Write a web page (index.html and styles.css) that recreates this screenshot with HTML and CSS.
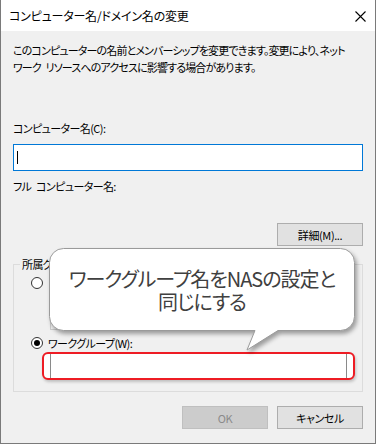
FILE: index.html
```html
<!DOCTYPE html>
<html lang="ja">
<head>
    <meta charset="UTF-8">
    <title>コンピューター名/ドメイン名の変更</title>
    <link rel="stylesheet" href="styles.css">
</head>
<body>

<div class="window">
    <div class="titlebar">
        <span class="title">コンピューター名/ドメイン名の変更</span>
        <svg class="close" width="11" height="11" viewBox="0 0 11 11">
            <path d="M0.5 0.5 L10.5 10.5 M10.5 0.5 L0.5 10.5" stroke="#000" stroke-width="1.1" fill="none"/>
        </svg>
    </div>

    <div class="content">
        <p class="desc">このコンピューターの名前とメンバーシップを変更できます。変更により、ネット<br>ワーク リソースへのアクセスに影響する場合があります。</p>

        <p class="field-label label-name">コンピューター名(C):</p>
        <div class="textbox focused"><span class="caret"></span></div>

        <p class="field-label label-full">フル コンピューター名:</p>

        <div class="row-right">
            <button class="btn">詳細(M)...</button>
        </div>

        <fieldset class="group">
            <legend>所属グループ</legend>
            <div class="radio-row">
                <span class="radio"></span>
                <span>ドメイン(D):</span>
            </div>
            <div class="textbox disabled"></div>
            <div class="radio-row">
                <span class="radio checked"></span>
                <span>ワークグループ(W):</span>
            </div>
            <div class="highlight">
                <div class="textbox workgroup"></div>
            </div>
        </fieldset>

        <div class="buttons">
            <button class="btn" disabled>OK</button>
            <button class="btn">キャンセル</button>
        </div>
    </div>

    <!-- annotation balloon over the dialog -->
    <div class="callout">
        <svg class="callout-shape" width="306" height="104" viewBox="0 0 306 104">
            <path d="M14.5 0.5 H291.5 A14 14 0 0 1 305.5 14.5 V68.5 A14 14 0 0 1 291.5 82.5 H229 L198 102 L206 82.5 H14.5 A14 14 0 0 1 0.5 68.5 V14.5 A14 14 0 0 1 14.5 0.5 Z" fill="#fff" stroke="#9a9a9a" stroke-width="1"/>
        </svg>
        <p class="callout-text">ワークグループ名をNASの設定と<br>同じにする</p>
    </div>
</div>

</body>
</html>
```

FILE: styles.css
```css
body {
    margin: 0;
    background-color: #fff;
    font-family: 'Noto Sans CJK JP', sans-serif;
    font-size: 11px;
    letter-spacing: -0.6px;
    word-spacing: 3px;
    font-feature-settings: "palt";
    color: #000;
}

.window {
    position: relative;
    width: 376px;
    height: 444px;
    box-sizing: border-box;
    border: 1px solid #7a7a7a;
    border-top: none;
    background-color: #f0f0f0;
    overflow: hidden;
}

.titlebar {
    display: flex;
    justify-content: space-between;
    align-items: center;
    height: 31px;
    background-color: #fff;
    padding-left: 8px;
}

.title {
    font-size: 12px;
    letter-spacing: -0.2px;
    line-height: 17px;
}

.close {
    margin-right: 9px;
    margin-top: 1px;
}

.content {
    padding: 11px 12px 0;
}

p {
    margin: 0;
    line-height: 17px;
    white-space: nowrap;
}

.desc {
    letter-spacing: -0.85px;
}

.label-name {
    margin-top: 44px;
}

.textbox {
    box-sizing: border-box;
    background-color: #fff;
    border: 1px solid #7a7a7a;
}

.textbox.focused {
    height: 27px;
    margin-top: 7px;
    border-color: #0078d7;
    display: flex;
    align-items: center;
    padding-left: 3px;
}

.caret {
    width: 1px;
    height: 13px;
    background-color: #000;
}

.label-full {
    margin-top: 7px;
}

.row-right {
    display: flex;
    justify-content: flex-end;
    margin-top: 28px;
}

.btn {
    width: 86px;
    height: 23px;
    box-sizing: border-box;
    border: 1px solid #adadad;
    background-color: #e1e1e1;
    font-family: inherit;
    font-size: 11px;
    letter-spacing: -0.4px;
    font-feature-settings: "palt";
    color: #000;
    padding: 0;
}

.btn:disabled {
    background-color: #cccccc;
    border-color: #bfbfbf;
    color: #8a8a8a;
}

.group {
    margin: 10px 0 0;
    padding: 0 0 11px 17px;
    border: 1px solid #dcdcdc;
    min-width: 0;
}

.group legend {
    margin-left: -11px;
    padding: 0 2px;
    line-height: 17px;
}

.radio-row {
    display: flex;
    align-items: center;
    gap: 5px;
    height: 17px;
    margin-top: 1px;
}

.radio {
    width: 12px;
    height: 12px;
    box-sizing: border-box;
    border: 1px solid #333;
    border-radius: 50%;
    background-color: #fff;
    display: flex;
    align-items: center;
    justify-content: center;
}

.radio.checked::after {
    content: "";
    width: 6px;
    height: 6px;
    border-radius: 50%;
    background-color: #000;
}

.textbox.disabled {
    height: 24px;
    width: 297px;
    margin: 15px 0 4px 19px;
    border-color: #cccccc;
    background-color: #f0f0f0;
}

.highlight {
    width: 313px;
    height: 28px;
    box-sizing: border-box;
    margin: 1px 0 0 11px;
    padding: 0 6px;
    border: 2px solid #ee1c24;
    border-radius: 6px;
    background-color: #fff;
    box-shadow: 1px 2px 3px rgba(0, 0, 0, 0.2);
}

.textbox.workgroup {
    height: 24px;
    border-top: none;
    border-bottom: none;
    border-color: #8a8a8a;
}

.buttons {
    display: flex;
    justify-content: flex-end;
    gap: 9px;
    margin-top: 14px;
}

.callout {
    position: absolute;
    left: 48px;
    top: 248px;
    width: 306px;
    height: 83px;
    display: flex;
    align-items: center;
    justify-content: center;
}

.callout-shape {
    position: absolute;
    left: 0;
    top: 0;
    filter: drop-shadow(2px 3px 2px rgba(0, 0, 0, 0.35));
}

.callout-text {
    position: relative;
    font-size: 20px;
    letter-spacing: -1px;
    word-spacing: 0;
    line-height: 23px;
    text-align: center;
    color: #404040;
}
```
